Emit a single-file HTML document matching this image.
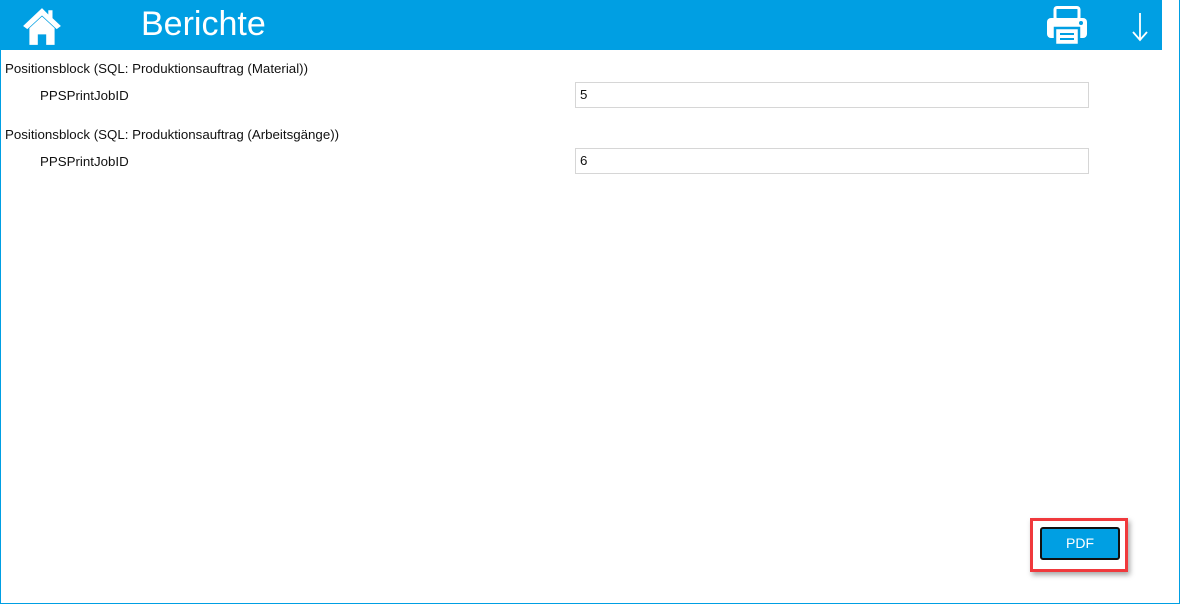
<!DOCTYPE html>
<html><head><meta charset="utf-8"><style>
*{margin:0;padding:0;box-sizing:border-box}
body{width:1180px;height:604px;background:#fff;position:relative;overflow:hidden;font-family:"Liberation Sans",Arial,sans-serif;font-size:13.3px;color:#111}
.frame{position:absolute;left:0;top:0;width:1180px;height:604px;border:1px solid #009fe3;border-top:none}
.hdr{position:absolute;left:0;top:0;width:1162px;height:50px;background:#009fe3}
.title{position:absolute;left:141px;top:5px;font-size:34px;color:#fff}
.t{position:absolute;white-space:nowrap}
.in{position:absolute;left:575px;width:514px;height:26px;border:1px solid #d6d6d6;padding-left:4px;line-height:24px;font-size:13.3px}
.red{position:absolute;left:1030px;top:518px;width:98px;height:54px;border:3px solid #f0393c;box-shadow:2px 3px 5px rgba(0,0,0,.35)}
.btn{position:absolute;left:1040px;top:527px;width:80px;height:33px;background:#009fe3;border:2px solid #111;border-radius:3px;color:#fff;text-align:center;line-height:29px;font-size:14px}
</style></head><body>
<div class="frame"></div>
<div class="hdr">
<svg style="position:absolute;left:21px;top:6px" width="42" height="40" viewBox="0 0 40 38"><path d="M20 2 L2 19 L6 22 L20 9 L34 22 L38 19 L30 11.5 V4 H26 V8 Z" fill="#fff"/><path d="M8 21 L20 10 L32 21 V37 H24 V27 H16 V37 H8 Z" fill="#fff"/></svg>
<div class="title">Berichte</div>
<svg style="position:absolute;left:1046px;top:6px" width="42" height="40" viewBox="0 0 42 40"><rect x="9" y="1.5" width="24" height="12" rx="2" fill="none" stroke="#fff" stroke-width="3"/><rect x="1" y="12" width="40" height="20" rx="4" fill="#fff"/><circle cx="35" cy="17" r="2" fill="#009fe3"/><rect x="9" y="22" width="24" height="17" fill="#fff" stroke="#009fe3" stroke-width="2.5"/><rect x="14" y="27" width="14" height="2" fill="#009fe3"/><rect x="14" y="32" width="14" height="2" fill="#009fe3"/></svg>
<svg style="position:absolute;left:1130px;top:12px" width="20" height="30" viewBox="0 0 20 30"><path d="M10 1 V28 M3 20 L10 28 L17 20" fill="none" stroke="#fff" stroke-width="1.8"/></svg>
</div>
<div class="t" style="left:5px;top:61px">Positionsblock (SQL: Produktionsauftrag (Material))</div>
<div class="t" style="left:40px;top:88px">PPSPrintJobID</div>
<div class="in" style="top:82px">5</div>
<div class="t" style="left:5px;top:127px">Positionsblock (SQL: Produktionsauftrag (Arbeitsgänge))</div>
<div class="t" style="left:40px;top:154px">PPSPrintJobID</div>
<div class="in" style="top:148px">6</div>
<div class="red"></div>
<div class="btn">PDF</div>
</body></html>
